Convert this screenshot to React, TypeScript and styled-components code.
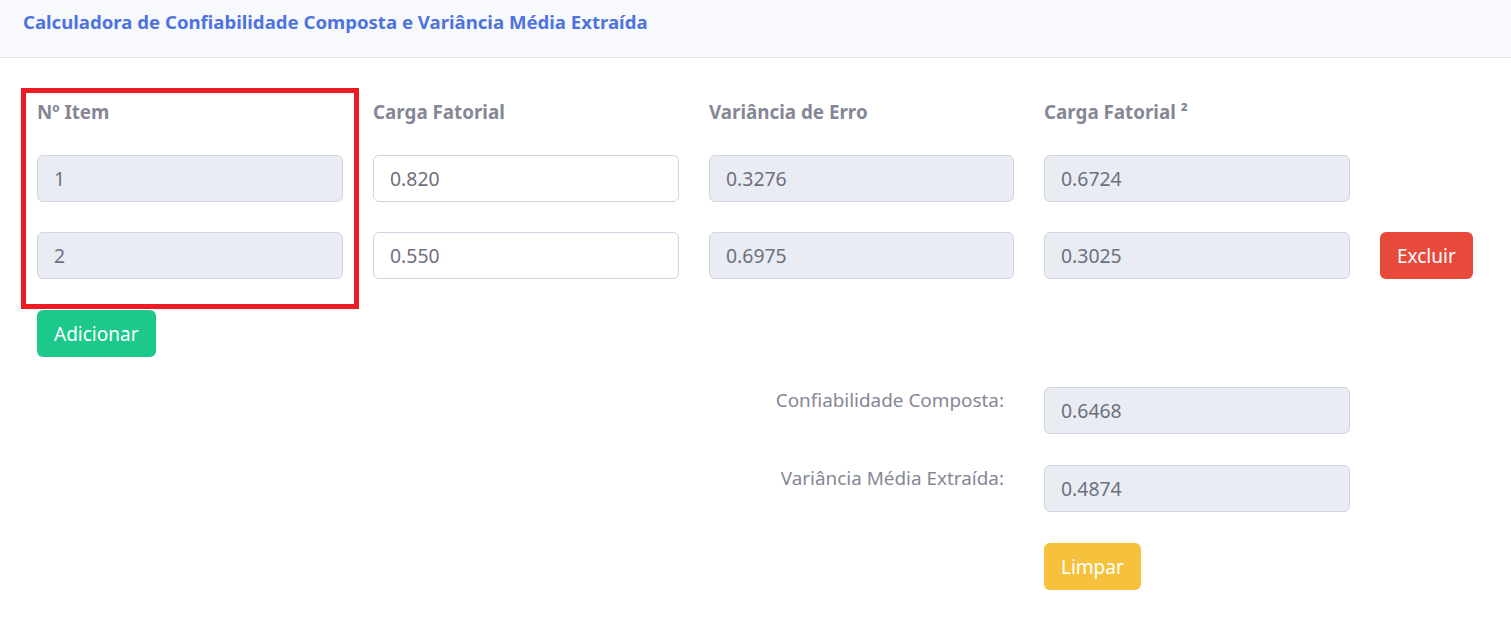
import React from "react";
import styled, { createGlobalStyle } from "styled-components";

const Global = createGlobalStyle`
  html, body { margin: 0; padding: 0; background: #fff; }
  body { font-family: "Noto Sans", "Open Sans", sans-serif; color: #858796; }
  * { box-sizing: border-box; }
`;

const Card = styled.div`
  width: 1511px;
  min-height: 640px;
  background: #fff;
`;

const CardHeader = styled.div`
  height: 58px;
  background: #f8f9fc;
  border-bottom: 1px solid #e3e6f0;
  padding: 9px 23px 0;
`;

const Title = styled.h6`
  margin: 0;
  font-size: 18.6px;
  line-height: 26px;
  font-weight: 700;
  color: #4e73df;
`;

const CardBody = styled.div`
  padding: 39px 37px 40px;
  display: flex;
  flex-direction: column;
`;

const ItemGrid = styled.div`
  display: grid;
  grid-template-columns: 306px 306px 305px 306px auto;
  column-gap: 30px;
  row-gap: 30px;
  align-items: center;
  position: relative;
`;

const HeadLabel = styled.div`
  font-size: 18.8px;
  line-height: 26px;
  font-weight: 700;
  color: #858796;
  padding-top: 2px;
`;

const Field = styled.input<{ $readonly?: boolean }>`
  width: 100%;
  height: 47px;
  padding: 0 16px;
  font-family: inherit;
  font-size: 19.4px;
  color: #6e707e;
  background: ${(p) => (p.$readonly ? "#eaecf4" : "#fff")};
  border: 1px solid #d1d3e2;
  border-radius: 6px;
  outline: none;
`;

const Button = styled.button<{ $bg: string }>`
  height: 47px;
  padding: 0 17px;
  font-family: inherit;
  font-size: 19px;
  color: #fff;
  background: ${(p) => p.$bg};
  border: none;
  border-radius: 6px;
  justify-self: start;
  cursor: pointer;
`;

const Highlight = styled.div`
  position: absolute;
  left: -16px;
  top: -9px;
  width: 338px;
  height: 221px;
  border: 5px solid #ed1c24;
  pointer-events: none;
`;

const ActionRow = styled.div`
  display: flex;
  margin-top: 31px;
`;

const SummaryGrid = styled.div`
  display: grid;
  grid-template-columns: 977px 306px;
  column-gap: 30px;
  row-gap: 31px;
  margin-top: 30px;
  align-items: start;
`;

const SummaryLabel = styled.div`
  text-align: right;
  padding-right: 10px;
  font-size: 18.9px;
  line-height: 26px;
  color: #858796;
`;

const Spacer = styled.div``;

const items = [
  { n: "1", carga: "0.820", erro: "0.3276", sq: "0.6724", del: false },
  { n: "2", carga: "0.550", erro: "0.6975", sq: "0.3025", del: true },
];

export default function App() {
  return (
    <>
      <Global />
      <Card>
        <CardHeader>
          <Title>Calculadora de Confiabilidade Composta e Variância Média Extraída</Title>
        </CardHeader>
        <CardBody>
          <ItemGrid>
            <Highlight />
            <HeadLabel>Nº Item</HeadLabel>
            <HeadLabel>Carga Fatorial</HeadLabel>
            <HeadLabel>Variância de Erro</HeadLabel>
            <HeadLabel>Carga Fatorial ²</HeadLabel>
            <Spacer />
            {items.map((it) => (
              <React.Fragment key={it.n}>
                <Field $readonly readOnly value={it.n} />
                <Field defaultValue={it.carga} />
                <Field $readonly readOnly value={it.erro} />
                <Field $readonly readOnly value={it.sq} />
                {it.del ? <Button $bg="#e74a3b">Excluir</Button> : <Spacer />}
              </React.Fragment>
            ))}
          </ItemGrid>
          <ActionRow>
            <Button $bg="#1cc88a">Adicionar</Button>
          </ActionRow>
          <SummaryGrid>
            <SummaryLabel>Confiabilidade Composta:</SummaryLabel>
            <Field $readonly readOnly value="0.6468" />
            <SummaryLabel>Variância Média Extraída:</SummaryLabel>
            <Field $readonly readOnly value="0.4874" />
            <Spacer />
            <Button $bg="#f6c23e">Limpar</Button>
          </SummaryGrid>
        </CardBody>
      </Card>
    </>
  );
}
